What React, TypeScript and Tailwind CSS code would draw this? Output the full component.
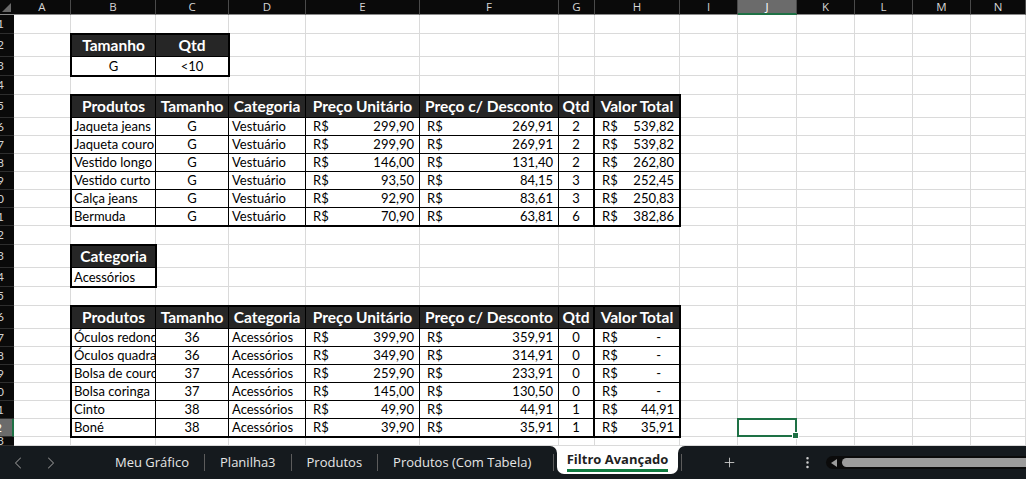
import { Fragment } from 'react';
import { ChevronLeft, ChevronRight, Plus, EllipsisVertical } from 'lucide-react';

const LETTERS = ['A', 'B', 'C', 'D', 'E', 'F', 'G', 'H', 'I', 'J', 'K', 'L', 'M', 'N'];

// full class names, picked by index
const COL_START = [
  'col-start-1', 'col-start-2', 'col-start-3', 'col-start-4', 'col-start-5',
  'col-start-6', 'col-start-7', 'col-start-8', 'col-start-9', 'col-start-10',
  'col-start-11', 'col-start-12', 'col-start-13', 'col-start-14', 'col-start-15',
];
const ROW_START = [
  'row-start-1', 'row-start-2', 'row-start-3', 'row-start-4', 'row-start-5',
  'row-start-6', 'row-start-7', 'row-start-8', 'row-start-9', 'row-start-10',
  'row-start-11', 'row-start-12', 'row-start-13', 'row-start-14', 'row-start-15',
  'row-start-16', 'row-start-17', 'row-start-18', 'row-start-19', 'row-start-20',
  'row-start-21', 'row-start-22', 'row-start-23', 'row-start-24',
];

type Row = [string, string, string, string, string, string, string];

const VESTUARIO: Row[] = [
  ['Jaqueta jeans', 'G', 'Vestuário', '299,90', '269,91', '2', '539,82'],
  ['Jaqueta couro', 'G', 'Vestuário', '299,90', '269,91', '2', '539,82'],
  ['Vestido longo', 'G', 'Vestuário', '146,00', '131,40', '2', '262,80'],
  ['Vestido curto', 'G', 'Vestuário', '93,50', '84,15', '3', '252,45'],
  ['Calça jeans', 'G', 'Vestuário', '92,90', '83,61', '3', '250,83'],
  ['Bermuda', 'G', 'Vestuário', '70,90', '63,81', '6', '382,86'],
];

const ACESSORIOS: Row[] = [
  ['Óculos redondo', '36', 'Acessórios', '399,90', '359,91', '0', '-'],
  ['Óculos quadrado', '36', 'Acessórios', '349,90', '314,91', '0', '-'],
  ['Bolsa de couro', '37', 'Acessórios', '259,90', '233,91', '0', '-'],
  ['Bolsa coringa', '37', 'Acessórios', '145,00', '130,50', '0', '-'],
  ['Cinto', '38', 'Acessórios', '49,90', '44,91', '1', '44,91'],
  ['Boné', '38', 'Acessórios', '39,90', '35,91', '1', '35,91'],
];

const HEADERS = ['Produtos', 'Tamanho', 'Categoria', 'Preço Unitário', 'Preço c/ Desconto', 'Qtd', 'Valor Total'];

const TABS = ['Meu Gráfico', 'Planilha3', 'Produtos', 'Produtos (Com Tabela)'];

const COLS_7 = 'grid grid-cols-[84px_73px_77px_114px_139px_36px_1fr]';

function Money({ value, last }: { value: string; last?: boolean }) {
  return (
    <div className={`flex items-center justify-between pl-[7px] ${last ? '' : 'border-r border-black'} ${value === '-' ? 'pr-[18px]' : 'pr-[5px]'}`}>
      <span>R$</span>
      <span>{value}</span>
    </div>
  );
}

function ProductTable({ rows, area }: { rows: Row[]; area: string }) {
  return (
    <div className={`${area} -mt-px -mr-px -mb-px -ml-px flex flex-col border-2 border-black bg-white`}>
      <div className={`${COLS_7} h-[22px] shrink-0 border-b border-black bg-[#262626] text-[15.5px] font-bold leading-[21px] text-white`}>
        {HEADERS.map((h, i) => (
          <div
            key={h}
            className={`flex items-center justify-center whitespace-nowrap ${i === 5 ? 'border-r-2 border-black' : i < 6 ? 'border-r border-black' : ''}`}
          >
            {h}
          </div>
        ))}
      </div>
      {rows.map((r, i) => (
        <div
          key={r[0]}
          className={`${COLS_7} text-[13px] leading-[17px] text-black ${i === rows.length - 1 ? 'flex-1' : 'h-[18px] shrink-0 border-b border-black'}`}
        >
          <div className="overflow-hidden whitespace-nowrap border-r border-black pl-[2px]">{r[0]}</div>
          <div className="flex items-center justify-center border-r border-black">{r[1]}</div>
          <div className="flex items-center border-r border-black pl-[3px]">{r[2]}</div>
          <Money value={r[3]} />
          <Money value={r[4]} />
          <div className="flex items-center justify-center border-r-2 border-black">{r[5]}</div>
          <Money value={r[6]} last />
        </div>
      ))}
    </div>
  );
}

export default function App() {
  const bgCells = [];
  for (let r = 1; r <= 23; r++) {
    // row header
    const active = r === 22;
    bgCells.push(
      <div
        key={`rh${r}`}
        className={`${COL_START[0]} ${ROW_START[r]} flex items-center justify-end overflow-hidden whitespace-nowrap border-b border-[#2e2e2e] pr-[10px] text-[12px] leading-none ${active ? 'border-r-2 border-r-[#1e7145] bg-[#6b6b6b] text-white' : 'bg-[#0a0a0a] text-[#d0d0d0]'}`}
      >
        {r}
      </div>
    );
    for (let c = 0; c < 14; c++) {
      bgCells.push(
        <div key={`c${r}-${c}`} className={`${COL_START[c + 1]} ${ROW_START[r]} border-r border-b border-[#dadada] bg-white`} />
      );
    }
  }

  return (
    <div className="flex h-[479px] w-[1026px] flex-col overflow-hidden bg-white font-['Lato',sans-serif]">
      <div className="grid h-[446px] shrink-0 grid-cols-[14px_57px_85px_73px_77px_114px_139px_36px_85px_58px_59px_58px_58px_58px_1fr] grid-rows-[15px_19px_23px_19px_19px_23px_repeat(6,18px)_19px_23px_19px_19px_23px_repeat(6,18px)_9px] overflow-hidden">
        {/* corner */}
        <div className="col-start-1 row-start-1 border-b border-[#8a8a8a] bg-[#0a0a0a]">
          <svg width="14" height="14" viewBox="0 0 14 14">
            <polygon points="11,3 11,12 2,12" fill="#6a6a6a" />
          </svg>
        </div>
        {/* column letters */}
        {LETTERS.map((l, c) => (
          <div
            key={l}
            className={`${COL_START[c + 1]} row-start-1 flex items-center justify-center border-r border-[#4a4a4a] font-['Open_Sans',sans-serif] text-[11.5px] leading-[12px] ${l === 'J' ? 'border-b-2 border-b-[#1e7145] bg-[#6b6b6b] text-white' : 'border-b border-b-[#8a8a8a] bg-[#0a0a0a] text-[#d6d6d6]'}`}
          >
            {l}
          </div>
        ))}
        {bgCells}

        {/* criteria: Tamanho / Qtd */}
        <div className="col-start-3 col-span-2 row-start-3 row-span-2 -mt-px -mr-px -mb-px -ml-px flex flex-col border-2 border-black bg-white">
          <div className="grid h-[22px] shrink-0 grid-cols-[84px_1fr] border-b border-black bg-[#262626] text-[15.5px] font-bold leading-[21px] text-white">
            <div className="flex items-center justify-center border-r border-black">Tamanho</div>
            <div className="flex items-center justify-center">Qtd</div>
          </div>
          <div className="grid flex-1 grid-cols-[84px_1fr] text-[13px] leading-[17px] text-black">
            <div className="flex items-center justify-center border-r border-black">G</div>
            <div className="flex items-center justify-center">&lt;10</div>
          </div>
        </div>

        <ProductTable rows={VESTUARIO} area="col-start-3 col-span-7 row-start-6 row-span-7" />

        {/* criteria: Categoria */}
        <div className="col-start-3 row-start-14 row-span-2 -mt-px -mr-px -mb-px -ml-px flex flex-col border-2 border-black bg-white">
          <div className="flex h-[22px] shrink-0 items-center justify-center border-b border-black bg-[#262626] text-[15.5px] font-bold leading-[21px] text-white">
            Categoria
          </div>
          <div className="flex flex-1 items-center pl-[2px] text-[13px] leading-[17px] text-black">Acessórios</div>
        </div>

        <ProductTable rows={ACESSORIOS} area="col-start-3 col-span-7 row-start-17 row-span-7" />

        {/* selected cell J22 */}
        <div className="relative col-start-11 row-start-23 -mt-px -ml-px border-2 border-[#1e7145]">
          <span className="absolute -right-[4px] -bottom-[4px] h-[7px] w-[7px] border border-white bg-[#1e7145]" />
        </div>
      </div>

      {/* sheet tabs */}
      <div className="flex h-[33px] shrink-0 bg-white font-['Open_Sans',sans-serif] text-[13px]">
        <div className="flex w-[557px] items-center rounded-tr-[7px] bg-[#151a1e] text-[#e6e6e6]">
          <div className="flex w-[100px] items-center gap-[13px] pl-[8px] text-[#8c8c8c]">
            <ChevronLeft size={20} strokeWidth={1.25} />
            <ChevronRight size={20} strokeWidth={1.25} />
          </div>
          {TABS.map((t, i) => (
            <Fragment key={t}>
              {i > 0 && <span className="h-[17px] w-px bg-[#5c5c5c]" />}
              <span className="whitespace-nowrap px-[15px]">{t}</span>
            </Fragment>
          ))}
          <span className="ml-auto mr-[3px] h-[17px] w-px bg-[#5c5c5c]" />
        </div>
        <div className="w-[121px] bg-[#151a1e]">
          <div className="flex h-[28px] items-center justify-center rounded-b-[7px] bg-white pt-[1px]">
            <span className="border-b-[3px] border-[#107c41] font-bold leading-[19px] text-[#1f1f1f]">Filtro Avançado</span>
          </div>
        </div>
        <div className="flex flex-1 items-center rounded-tl-[7px] bg-[#151a1e] text-[#cfcfcf]">
          <span className="ml-[3px] h-[17px] w-px bg-[#5c5c5c]" />
          <Plus className="ml-[40px]" size={15} strokeWidth={1.4} />
          <EllipsisVertical className="ml-[63px]" size={15} strokeWidth={2} />
          <div className="ml-[11px] flex h-[13px] flex-1 items-center rounded-l-full bg-[#0b0b0b] pl-[5px]">
            <svg width="6" height="8" viewBox="0 0 6 8">
              <polygon points="6,0 6,8 0,4" fill="#9c9c9c" />
            </svg>
            <div className="ml-[5px] h-[9px] flex-1 rounded-l-full bg-[#9c9c9c]" />
          </div>
        </div>
      </div>
    </div>
  );
}
